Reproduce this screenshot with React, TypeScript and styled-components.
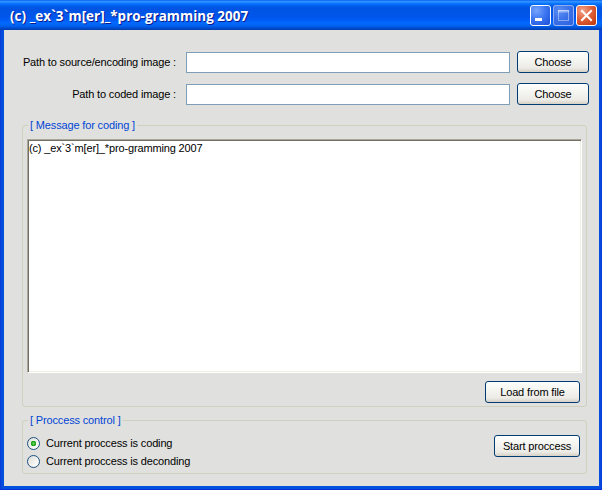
import React from "react";
import styled, { createGlobalStyle } from "styled-components";

const GlobalStyle = createGlobalStyle`
  html, body { margin: 0; padding: 0; overflow: hidden; }
  body { font-family: "Liberation Sans", Arial, sans-serif; }
  * { box-sizing: border-box; }
`;

const Window = styled.div`
  width: 602px;
  height: 490px;
  display: flex;
  flex-direction: column;
  background: #0054e3;
`;

const TitleBar = styled.div`
  height: 30px;
  flex: none;
  display: flex;
  align-items: center;
  justify-content: space-between;
  padding: 0 5px 0 10px;
  background: linear-gradient(
    to bottom,
    #0058ee 0%,
    #3593ff 4%,
    #288eff 7%,
    #127dff 10%,
    #036ffc 14%,
    #0262ee 18%,
    #0057e5 24%,
    #0054e3 30%,
    #0055eb 56%,
    #005bf5 66%,
    #026afe 76%,
    #0062ef 86%,
    #0052d6 92%,
    #0046c4 96%,
    #003ea8 100%
  );
`;

const TitleText = styled.span`
  font-family: "Open Sans", "DejaVu Sans", sans-serif;
  font-weight: 700;
  font-size: 13.4px;
  color: #ffffff;
  text-shadow: 1px 1px 0 #0a1b8f;
  letter-spacing: 0.05px;
  white-space: nowrap;
  margin-top: 1px;
`;

const Controls = styled.div`
  display: flex;
  gap: 2px;
  margin-top: 1px;
`;

const CtrlButton = styled.div<{ $kind: "min" | "max" | "close" }>`
  width: 21px;
  height: 21px;
  border-radius: 3px;
  display: flex;
  align-items: center;
  justify-content: center;
  border: 1px solid
    ${(p) => (p.$kind === "max" ? "rgba(255,255,255,0.45)" : "#ffffff")};
  background: ${(p) =>
    p.$kind === "close"
      ? "radial-gradient(circle at 30% 25%, #f1a48b 0%, #e0633c 45%, #cc4418 80%, #b63410 100%)"
      : p.$kind === "max"
      ? "radial-gradient(circle at 30% 25%, #5a8df5 0%, #3a70e8 50%, #2e62e0 100%)"
      : "radial-gradient(circle at 30% 25%, #77a5fc 0%, #3e78f2 45%, #2459de 85%, #1c4fd4 100%)"};
`;

const Frame = styled.div`
  flex: 1;
  display: flex;
  padding: 0 5px 4px 4px;
  background: linear-gradient(to right, #0831d9 0, #0849dc 1px, #0050de 4px, #0050de calc(100% - 5px), #0849dc calc(100% - 1px), #0831d9 100%);
  box-shadow: inset 0 -1px 0 #0831d9;
`;

const Client = styled.div`
  flex: 1;
  background: #e0e0de;
  padding: 21px 10px 0 17px;
  display: flex;
  flex-direction: column;
  font-size: 11px;
  letter-spacing: -0.15px;
  color: #000;
`;

const PathRow = styled.div<{ $gap?: number }>`
  display: flex;
  align-items: center;
  height: 22px;
  margin-top: ${(p) => p.$gap ?? 0}px;
`;

const Label = styled.label`
  width: 155px;
  text-align: right;
  white-space: nowrap;
  flex: none;
`;

const TextBox = styled.input`
  width: 324px;
  height: 21px;
  margin: 1px 0 0 10px;
  border: 1px solid #7f9db9;
  background: #ffffff;
  font: inherit;
  padding: 0 2px;
  outline: none;
`;

const Button = styled.button<{ $w: number; $h?: number }>`
  width: ${(p) => p.$w}px;
  height: ${(p) => p.$h ?? 22}px;
  flex: none;
  border: 1px solid #003c74;
  border-radius: 3px;
  background: linear-gradient(to bottom, #ffffff 0%, #f7f7f4 30%, #ecebe6 80%, #d6d0c5 100%);
  font-family: "Liberation Sans", Arial, sans-serif;
  font-size: 11px;
  letter-spacing: -0.15px;
  color: #000;
  padding: 0;
  cursor: default;
`;

const ChooseButton = styled(Button)`
  margin-left: 7px;
`;

const Group = styled.fieldset<{ $top: number }>`
  margin: ${(p) => p.$top}px 0 0 1px;
  width: 565px;
  min-width: 0;
  border: 1px solid #d0d0bf;
  border-radius: 3px;
  padding: 7px 4px 3px 4px;
`;

const Legend = styled.legend`
  color: #0046d5;
  font-size: 11px;
  line-height: 13px;
  padding: 0 2px;
  margin-left: 1px;
`;

const Message = styled.textarea`
  display: block;
  width: 100%;
  height: 234px;
  resize: none;
  border: 1px solid;
  border-color: #aca899 #ffffff #ffffff #aca899;
  box-shadow: inset 1px 1px 0 #716f64, inset -1px -1px 0 #f1efe2;
  background: #ffffff;
  font-family: "Liberation Sans", Arial, sans-serif;
  font-size: 11px;
  letter-spacing: -0.15px;
  line-height: 13px;
  padding: 2px 1px;
  outline: none;
  color: #000;
`;

const LoadRow = styled.div`
  display: flex;
  justify-content: flex-end;
  padding-right: 2px;
  margin-top: 8px;
`;

const ControlRow = styled.div`
  display: flex;
  justify-content: space-between;
  align-items: flex-start;
`;

const RadioList = styled.div`
  display: flex;
  flex-direction: column;
`;

const RadioRow = styled.label`
  display: flex;
  align-items: center;
  height: 18px;
  gap: 6px;
`;

const Radio = styled.input`
  appearance: none;
  -webkit-appearance: none;
  margin: 0;
  width: 13px;
  height: 13px;
  border-radius: 50%;
  border: 1px solid #1c5180;
  background: linear-gradient(135deg, #dcdcd7 0%, #f4f4f1 60%, #ffffff 100%);
  flex: none;
  &:checked {
    background: radial-gradient(circle at 50% 50%, #66e062 0, #2fb32b 1.5px, #1d991a 2.5px, rgba(0, 0, 0, 0) 3px),
      linear-gradient(135deg, #dcdcd7 0%, #f4f4f1 60%, #ffffff 100%);
  }
`;

const StartButton = styled(Button)`
  margin: 1px 2px 0 0;
`;

export default function App() {
  return (
    <>
      <GlobalStyle />
      <Window>
        <TitleBar>
          <TitleText>(c) _ex`3`m[er]_*pro-gramming 2007</TitleText>
          <Controls>
            <CtrlButton $kind="min">
              <svg width="19" height="19" viewBox="0 0 19 19">
                <rect x="4" y="12" width="7" height="3" fill="#ffffff" />
              </svg>
            </CtrlButton>
            <CtrlButton $kind="max">
              <svg width="19" height="19" viewBox="0 0 19 19">
                <rect x="4.5" y="4.5" width="10" height="10" fill="none" stroke="rgba(255,255,255,0.4)" strokeWidth="1" />
                <rect x="4" y="4" width="11" height="2.5" fill="rgba(255,255,255,0.4)" />
              </svg>
            </CtrlButton>
            <CtrlButton $kind="close">
              <svg width="19" height="19" viewBox="0 0 19 19">
                <path d="M5 5 L14 14 M14 5 L5 14" stroke="#ffffff" strokeWidth="2" strokeLinecap="square" />
              </svg>
            </CtrlButton>
          </Controls>
        </TitleBar>
        <Frame>
          <Client>
            <PathRow>
              <Label>Path to source/encoding image :</Label>
              <TextBox type="text" defaultValue="" />
              <ChooseButton $w={72}>Choose</ChooseButton>
            </PathRow>
            <PathRow $gap={10}>
              <Label>Path to coded image :</Label>
              <TextBox type="text" defaultValue="" />
              <ChooseButton $w={72}>Choose</ChooseButton>
            </PathRow>
            <Group $top={14}>
              <Legend>[ Message for coding ]</Legend>
              <Message defaultValue="(c) _ex`3`m[er]_*pro-gramming 2007" />
              <LoadRow>
                <Button $w={95}>Load from file</Button>
              </LoadRow>
            </Group>
            <Group $top={7}>
              <Legend>[ Proccess control ]</Legend>
              <ControlRow>
                <RadioList>
                  <RadioRow>
                    <Radio type="radio" name="proc" defaultChecked />
                    Current proccess is coding
                  </RadioRow>
                  <RadioRow>
                    <Radio type="radio" name="proc" />
                    Current proccess is deconding
                  </RadioRow>
                </RadioList>
                <StartButton $w={86}>Start proccess</StartButton>
              </ControlRow>
            </Group>
          </Client>
        </Frame>
      </Window>
    </>
  );
}
